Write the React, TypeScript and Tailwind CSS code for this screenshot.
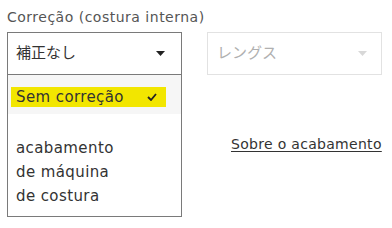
import React from 'react';

const font = { fontFamily: '"DejaVu Sans", "Noto Sans CJK JP", sans-serif' };

function Caret({ className }: { className: string }) {
  return (
    <svg width="9" height="5" viewBox="0 0 9 5" className={className}>
      <path d="M0 0h9L4.5 5z" fill="currentColor" />
    </svg>
  );
}

export default function App() {
  return (
    <div className="h-[228px] w-[392px] bg-white pl-[7px] pt-[7px]" style={font}>
      <div className="text-[14px] leading-[20px] tracking-[0.5px] text-[#555]">Correção (costura interna)</div>
      <div className="mt-[5px] flex gap-[25px]">
        <div className="relative w-[175px]">
          <div className="flex h-[43px] items-center justify-between border border-[#7a7a7a] pl-[8px] pr-[16px] text-[15px] text-[#333]">
            <span>補正なし</span>
            <Caret className="text-[#222]" />
          </div>
          <div className="absolute left-0 top-[42px] w-[175px] border border-[#7a7a7a] bg-white">
            <div className="bg-[#f6f6f6] px-[3px] pb-[7px] pt-[12px]">
              <div className="flex h-[20px] w-[155px] items-center justify-between bg-[#f2e600] pl-[5px] pr-[9px] text-[15px] tracking-[0.4px] text-[#333]">
                <span>Sem correção</span>
                <svg width="10" height="8" viewBox="0 0 10 8">
                  <path d="M1 4l3 3 5-6" fill="none" stroke="#222" strokeWidth="1.8" />
                </svg>
              </div>
            </div>
            <div className="pb-[8px] pl-[8px] pt-[22px] text-[15px] leading-[24px] tracking-[0.4px] text-[#333]">
              <div>acabamento</div>
              <div>de máquina</div>
              <div>de costura</div>
            </div>
          </div>
        </div>
        <div className="w-[175px]">
          <div className="flex h-[43px] items-center justify-between border border-[#e2e2e2] pl-[9px] pr-[14px] text-[15px] text-[#b0b0b0]">
            <span>レングス</span>
            <Caret className="text-[#d8d8d8]" />
          </div>
          <div className="mt-[59px] pl-[24px] text-[14px] leading-[20px] tracking-[0.3px] text-[#333] underline underline-offset-2">
            Sobre o acabamento
          </div>
        </div>
      </div>
    </div>
  );
}
